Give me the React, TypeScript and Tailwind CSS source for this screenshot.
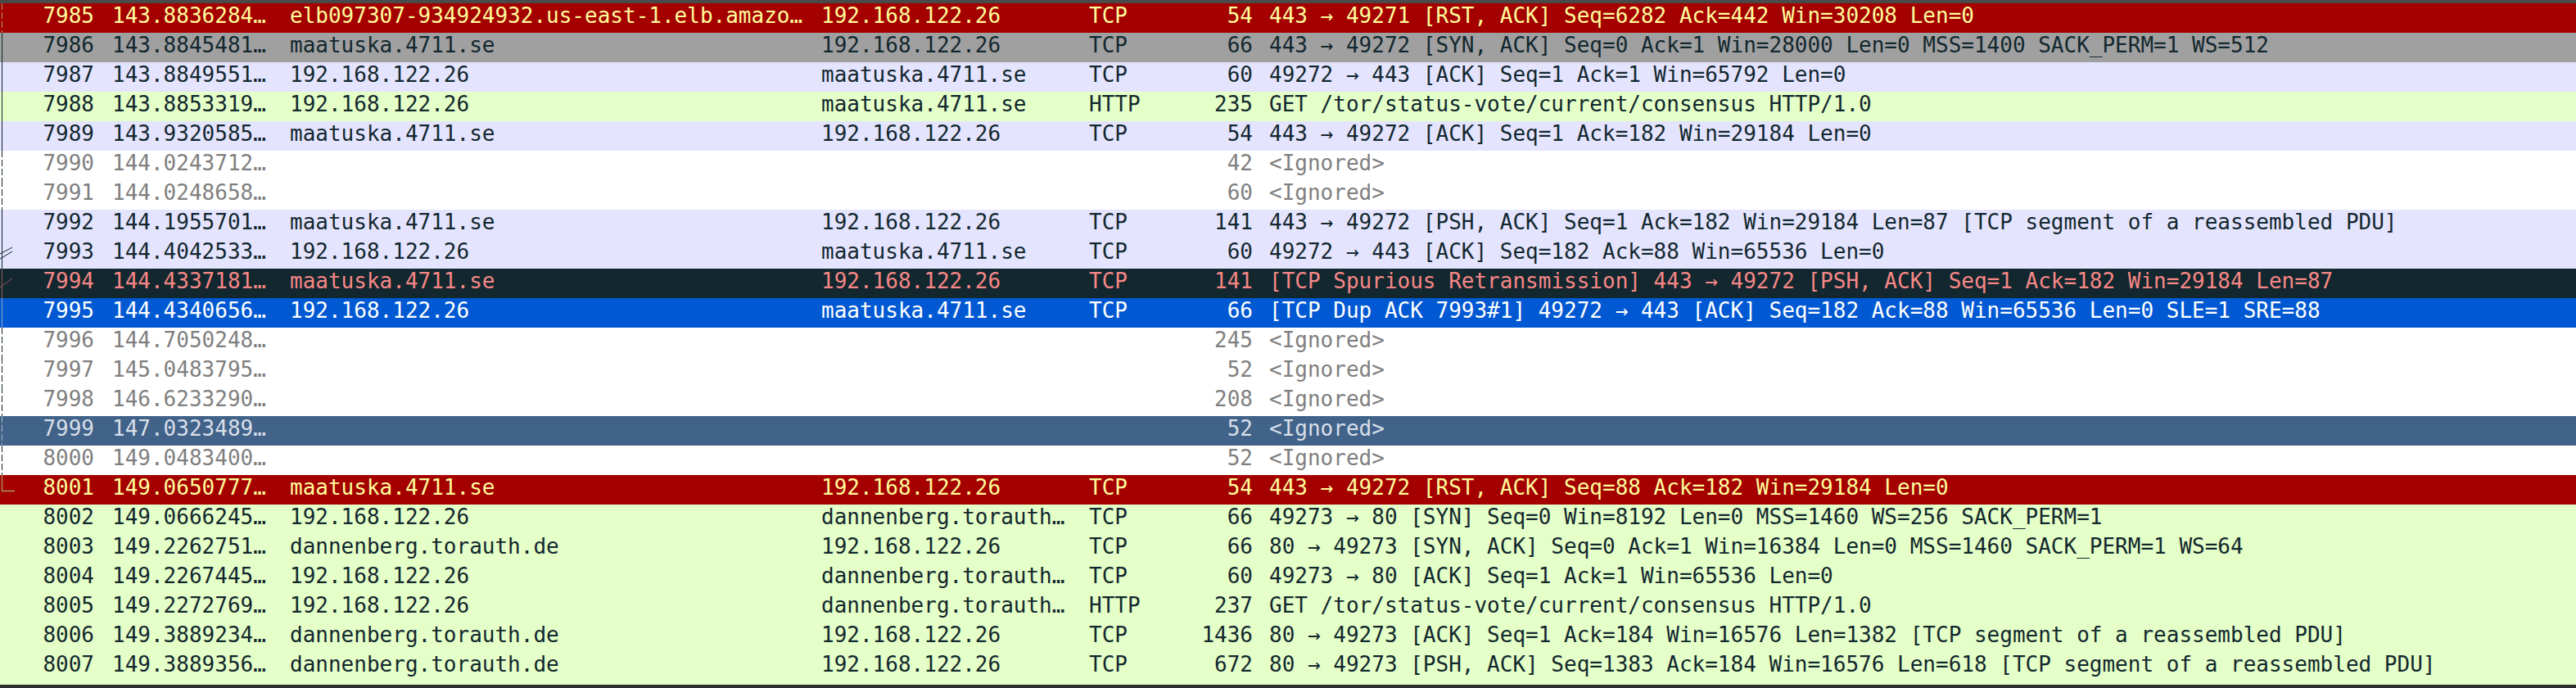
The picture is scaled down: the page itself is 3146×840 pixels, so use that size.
import React from "react";

type Kind = "rst" | "syn" | "tcp" | "http" | "ign" | "bad" | "sel" | "ignsel";
type Mark = "dash" | "solid" | "ack" | "dup" | "end" | "none";

const kinds: Record<Kind, string> = {
  rst: "bg-[#a40000] text-[#fffc9c]",
  syn: "bg-[#a0a0a0] text-[#12272e]",
  tcp: "bg-[#e4e4ff] text-[#12272e]",
  http: "bg-[#e4ffc7] text-[#12272e]",
  ign: "bg-white text-[#7f7f7f]",
  bad: "bg-[#12272e] text-[#f78787]",
  sel: "bg-[#0059d3] text-white",
  ignsel: "bg-[#41638a] text-[#d9dfe8]",
};

const IP = "192.168.122.26";
const MA = "maatuska.4711.se";
const DA = "dannenberg.torauth…";
const DB = "dannenberg.torauth.de";

const rows: [Kind, Mark, string, string, string, string, string, string, string][] = [
  ["rst", "dash", "7985", "143.8836284…", "elb097307-934924932.us-east-1.elb.amazo…", IP, "TCP", "54", "443 → 49271 [RST, ACK] Seq=6282 Ack=442 Win=30208 Len=0"],
  ["syn", "solid", "7986", "143.8845481…", MA, IP, "TCP", "66", "443 → 49272 [SYN, ACK] Seq=0 Ack=1 Win=28000 Len=0 MSS=1400 SACK_PERM=1 WS=512"],
  ["tcp", "solid", "7987", "143.8849551…", IP, MA, "TCP", "60", "49272 → 443 [ACK] Seq=1 Ack=1 Win=65792 Len=0"],
  ["http", "solid", "7988", "143.8853319…", IP, MA, "HTTP", "235", "GET /tor/status-vote/current/consensus HTTP/1.0"],
  ["tcp", "solid", "7989", "143.9320585…", MA, IP, "TCP", "54", "443 → 49272 [ACK] Seq=1 Ack=182 Win=29184 Len=0"],
  ["ign", "dash", "7990", "144.0243712…", "", "", "", "42", "<Ignored>"],
  ["ign", "dash", "7991", "144.0248658…", "", "", "", "60", "<Ignored>"],
  ["tcp", "solid", "7992", "144.1955701…", MA, IP, "TCP", "141", "443 → 49272 [PSH, ACK] Seq=1 Ack=182 Win=29184 Len=87 [TCP segment of a reassembled PDU]"],
  ["tcp", "ack", "7993", "144.4042533…", IP, MA, "TCP", "60", "49272 → 443 [ACK] Seq=182 Ack=88 Win=65536 Len=0"],
  ["bad", "dup", "7994", "144.4337181…", MA, IP, "TCP", "141", "[TCP Spurious Retransmission] 443 → 49272 [PSH, ACK] Seq=1 Ack=182 Win=29184 Len=87"],
  ["sel", "solid", "7995", "144.4340656…", IP, MA, "TCP", "66", "[TCP Dup ACK 7993#1] 49272 → 443 [ACK] Seq=182 Ack=88 Win=65536 Len=0 SLE=1 SRE=88"],
  ["ign", "dash", "7996", "144.7050248…", "", "", "", "245", "<Ignored>"],
  ["ign", "dash", "7997", "145.0483795…", "", "", "", "52", "<Ignored>"],
  ["ign", "dash", "7998", "146.6233290…", "", "", "", "208", "<Ignored>"],
  ["ignsel", "dash", "7999", "147.0323489…", "", "", "", "52", "<Ignored>"],
  ["ign", "dash", "8000", "149.0483400…", "", "", "", "52", "<Ignored>"],
  ["rst", "end", "8001", "149.0650777…", MA, IP, "TCP", "54", "443 → 49272 [RST, ACK] Seq=88 Ack=182 Win=29184 Len=0"],
  ["http", "none", "8002", "149.0666245…", IP, DA, "TCP", "66", "49273 → 80 [SYN] Seq=0 Win=8192 Len=0 MSS=1460 WS=256 SACK_PERM=1"],
  ["http", "none", "8003", "149.2262751…", DB, IP, "TCP", "66", "80 → 49273 [SYN, ACK] Seq=0 Ack=1 Win=16384 Len=0 MSS=1460 SACK_PERM=1 WS=64"],
  ["http", "none", "8004", "149.2267445…", IP, DA, "TCP", "60", "49273 → 80 [ACK] Seq=1 Ack=1 Win=65536 Len=0"],
  ["http", "none", "8005", "149.2272769…", IP, DA, "HTTP", "237", "GET /tor/status-vote/current/consensus HTTP/1.0"],
  ["http", "none", "8006", "149.3889234…", DB, IP, "TCP", "1436", "80 → 49273 [ACK] Seq=1 Ack=184 Win=16576 Len=1382 [TCP segment of a reassembled PDU]"],
  ["http", "none", "8007", "149.3889356…", DB, IP, "TCP", "672", "80 → 49273 [PSH, ACK] Seq=1383 Ack=184 Win=16576 Len=618 [TCP segment of a reassembled PDU]"],
  ["http", "none", "8008", "149.3889412…", DB, IP, "TCP", "1436", "80 → 49273 [ACK] Seq=2001 Ack=184 Win=16576 Len=1382 [TCP segment of a reassembled PDU]"],
];

const lineColor: Record<Kind, string> = {
  rst: "#a89a62",
  syn: "#12272e",
  tcp: "#12272e",
  http: "#12272e",
  ign: "#12272e",
  bad: "#8a5a5e",
  sel: "#8fa6c8",
  ignsel: "#a7b4c4",
};

function Gutter({ kind, mark }: { kind: Kind; mark: Mark }) {
  const c = lineColor[kind];
  return (
    <svg width="24" height="36" className="shrink-0">
      {mark === "dash" && <line x1="2.5" y1="0" x2="2.5" y2="36" stroke={c} strokeDasharray="8 3" />}
      {(mark === "solid" || mark === "ack" || mark === "dup") && <line x1="2.5" y1="0" x2="2.5" y2="36" stroke={c} />}
      {mark === "ack" && (
        <g stroke={c} fill="none">
          <line x1="0" y1="18" x2="15" y2="10" />
          <line x1="0" y1="24" x2="15" y2="15" />
        </g>
      )}
      {mark === "dup" && <line x1="0" y1="23" x2="15" y2="12" stroke={c} />}
      {mark === "end" && <polyline points="2.5,0 2.5,19.5 18,19.5" fill="none" stroke={c} strokeWidth="1.3" />}
    </svg>
  );
}

export default function App() {
  return (
    <div className="h-[840px] w-full overflow-hidden bg-[#2e2e2e] flex flex-col font-['DejaVu_Sans_Mono',monospace] text-[26px] leading-[30px]">
      <div className="h-1 bg-[#4a4a4a] shrink-0" />
      <div className="h-[832px] overflow-hidden shrink-0">
        {rows.map(([kind, mark, no, time, src, dst, proto, len, info]) => (
          <div key={no} className={`flex items-start h-9 whitespace-pre ${kinds[kind]}`}>
            <Gutter kind={kind} mark={mark} />
            <div className="w-[91px] shrink-0 text-right">{no}</div>
            <div className="w-[22px] shrink-0" />
            <div className="w-[217px] shrink-0">{time}</div>
            <div className="w-[649px] shrink-0">{src}</div>
            <div className="w-[327px] shrink-0">{dst}</div>
            <div className="w-[110px] shrink-0">{proto}</div>
            <div className="w-[90px] shrink-0 text-right">{len}</div>
            <div className="pl-[20px] flex-1">{info}</div>
          </div>
        ))}
      </div>
    </div>
  );
}
